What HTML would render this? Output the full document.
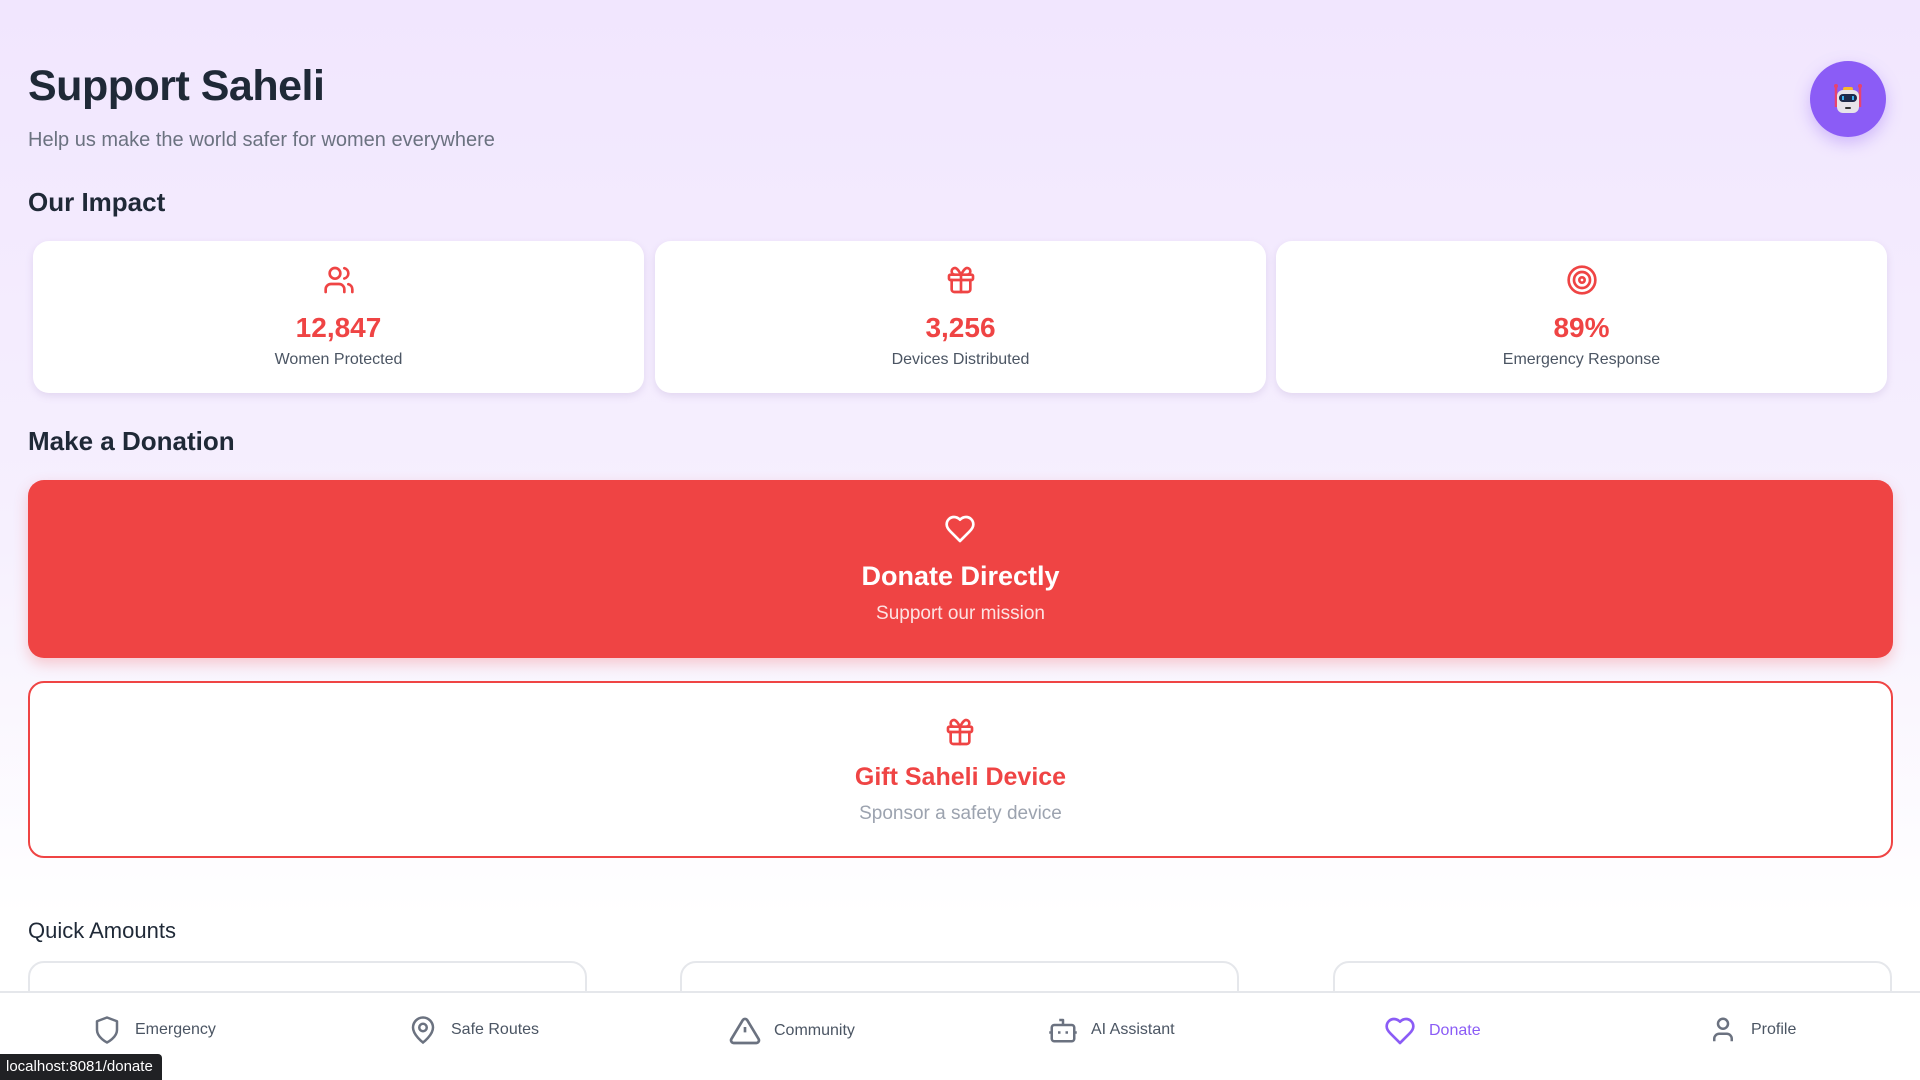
<!DOCTYPE html>
<html><head><meta charset="utf-8"><style>
*{margin:0;padding:0;box-sizing:border-box}
body{width:1920px;height:1080px;overflow:hidden;font-family:"Liberation Sans",sans-serif;background:linear-gradient(180deg,#f1e6fe 0%,#f6f0fe 50%,#ffffff 85%);position:relative;color:#1f2937}
.abs{position:absolute}
h1{position:absolute;left:28px;top:62px;font-size:43px;font-weight:bold;color:#1f2937;letter-spacing:-0.5px}
.sub{left:28px;top:129px;font-size:20px;color:#6b7280}
.h2{left:28px;font-size:26px;font-weight:bold;color:#1f2937}
.card{position:absolute;top:241px;width:611px;height:152px;background:#fff;border-radius:16px;box-shadow:0 3px 8px rgba(120,90,160,.15);text-align:center}
.card svg{position:absolute;left:50%;top:23px;margin-left:-16px}
.card .n{position:absolute;top:71px;width:100%;font-size:28px;font-weight:bold;color:#ef4444}
.card .l{position:absolute;top:110px;width:100%;font-size:16px;color:#4b5563}
.big{position:absolute;left:28px;width:1865px;height:178px;border-radius:16px;text-align:center}
.qa{position:absolute;top:961px;width:559px;height:60px;border:2px solid #e5e7eb;border-radius:16px;background:#fff}
.nav{position:absolute;left:0;top:991px;width:1920px;height:89px;background:#fff;border-top:2px solid #e5e7eb}
.ni{position:absolute;top:22px;display:flex;align-items:center;gap:13px;font-size:16px;color:#4b5563}
</style></head><body>
<h1>Support Saheli</h1>
<div class="abs sub">Help us make the world safer for women everywhere</div>
<div class="abs" style="left:1810px;top:61px;width:76px;height:76px;border-radius:50%;background:#8b5cf6;box-shadow:0 6px 16px rgba(139,92,246,.35)">
<svg width="76" height="76" viewBox="0 0 76 76"><line x1="26" y1="26" x2="26" y2="46" stroke="#e8436e" stroke-width="2.5"/><line x1="50" y1="26" x2="50" y2="46" stroke="#e8436e" stroke-width="2.5"/><circle cx="26" cy="25" r="2" fill="#e8436e"/><circle cx="50" cy="25" r="2" fill="#e8436e"/><rect x="33" y="26" width="10" height="4" rx="2" fill="#f9b82b"/><rect x="27" y="29" width="22" height="23" rx="6" fill="#e7e4ea"/><rect x="29" y="33" width="18" height="8" rx="4" fill="#1e2a4a"/><rect x="32" y="35" width="2" height="4" fill="#3ab0f0"/><rect x="42" y="35" width="2" height="4" fill="#3ab0f0"/><rect x="35" y="46" width="6" height="2" rx="1" fill="#333"/></svg></div>
<div class="abs h2" style="top:187px">Our Impact</div>
<div class="card" style="left:33px"><svg width="32" height="32" viewBox="0 0 24 24" fill="none" stroke="#ef4444" stroke-width="2" stroke-linecap="round" stroke-linejoin="round"><path d="M16 21v-2a4 4 0 0 0-4-4H6a4 4 0 0 0-4 4v2"/><circle cx="9" cy="7" r="4"/><path d="M22 21v-2a4 4 0 0 0-3-3.87"/><path d="M16 3.13a4 4 0 0 1 0 7.75"/></svg><div class="n">12,847</div><div class="l">Women Protected</div></div>
<div class="card" style="left:655px"><svg width="32" height="32" viewBox="0 0 24 24" fill="none" stroke="#ef4444" stroke-width="2" stroke-linecap="round" stroke-linejoin="round"><rect x="3" y="8" width="18" height="4" rx="1"/><path d="M12 8v13"/><path d="M19 12v7a2 2 0 0 1-2 2H7a2 2 0 0 1-2-2v-7"/><path d="M7.5 8a2.5 2.5 0 0 1 0-5C9.5 3 12 8 12 8s2.5-5 4.5-5a2.5 2.5 0 0 1 0 5"/></svg><div class="n">3,256</div><div class="l">Devices Distributed</div></div>
<div class="card" style="left:1276px"><svg width="32" height="32" viewBox="0 0 24 24" fill="none" stroke="#ef4444" stroke-width="2"><circle cx="12" cy="12" r="10"/><circle cx="12" cy="12" r="6"/><circle cx="12" cy="12" r="2"/></svg><div class="n">89%</div><div class="l">Emergency Response</div></div>
<div class="abs h2" style="top:426px">Make a Donation</div>
<div class="big" style="top:480px;background:#ef4444;box-shadow:0 6px 14px rgba(239,68,68,.25)">
<svg style="position:absolute;left:916px;top:33px" width="32" height="32" viewBox="0 0 24 24" fill="none" stroke="#fff" stroke-width="2" stroke-linejoin="round"><path d="M19 14c1.5-1.5 3-3.2 3-5.5A5.5 5.5 0 0 0 16.5 3c-1.8 0-3 .5-4.5 2-1.5-1.5-2.7-2-4.5-2A5.5 5.5 0 0 0 2 8.5c0 2.3 1.5 4 3 5.5l7 7Z"/></svg>
<div style="position:absolute;top:81px;width:100%;font-size:27px;font-weight:bold;color:#fff">Donate Directly</div>
<div style="position:absolute;top:123px;width:100%;font-size:19px;color:#fde2e2">Support our mission</div></div>
<div class="big" style="top:681px;height:177px;background:#fff;border:2px solid #ef4444">
<svg style="position:absolute;left:914px;top:33px" width="32" height="32" viewBox="0 0 24 24" fill="none" stroke="#ef4444" stroke-width="2" stroke-linecap="round" stroke-linejoin="round"><rect x="3" y="8" width="18" height="4" rx="1"/><path d="M12 8v13"/><path d="M19 12v7a2 2 0 0 1-2 2H7a2 2 0 0 1-2-2v-7"/><path d="M7.5 8a2.5 2.5 0 0 1 0-5C9.5 3 12 8 12 8s2.5-5 4.5-5a2.5 2.5 0 0 1 0 5"/></svg>
<div style="position:absolute;top:80px;width:100%;font-size:25px;font-weight:bold;color:#ef4444">Gift Saheli Device</div>
<div style="position:absolute;top:120px;width:100%;font-size:19px;color:#9ca3af">Sponsor a safety device</div></div>
<div class="abs" style="left:28px;top:918px;font-size:22px;color:#1f2937">Quick Amounts</div>
<div class="qa" style="left:28px"></div><div class="qa" style="left:680px"></div><div class="qa" style="left:1333px"></div>
<div class="nav">
<div class="ni" style="left:92px"><svg width="30" height="30" viewBox="0 0 24 24" fill="none" stroke="#6b7280" stroke-width="2" stroke-linejoin="round"><path d="M12 22s8-4 8-10V5l-8-3-8 3v7c0 6 8 10 8 10z"/></svg>Emergency</div>
<div class="ni" style="left:408px"><svg width="30" height="30" viewBox="0 0 24 24" fill="none" stroke="#6b7280" stroke-width="2"><path d="M20 10c0 6-8 12-8 12s-8-6-8-12a8 8 0 0 1 16 0z"/><circle cx="12" cy="10" r="3"/></svg>Safe Routes</div>
<div class="ni" style="left:729px"><svg width="32" height="32" viewBox="0 0 24 24" fill="none" stroke="#6b7280" stroke-width="2" stroke-linejoin="round"><path d="M10.3 3.9 1.8 18a2 2 0 0 0 1.7 3h17a2 2 0 0 0 1.7-3L13.7 3.9a2 2 0 0 0-3.4 0z"/><path d="M12 9v4M12 17h.01"/></svg>Community</div>
<div class="ni" style="left:1048px"><svg width="30" height="30" viewBox="0 0 24 24" fill="none" stroke="#6b7280" stroke-width="2" stroke-linejoin="round"><rect x="3" y="8" width="18" height="13" rx="2"/><path d="M12 8V4H9"/><path d="M9 13v2M15 13v2M1 14h2M21 14h2"/></svg>AI Assistant</div>
<div class="ni" style="left:1384px;color:#8b5cf6"><svg width="32" height="32" viewBox="0 0 24 24" fill="none" stroke="#8b5cf6" stroke-width="2" stroke-linejoin="round"><path d="M19 14c1.5-1.5 3-3.2 3-5.5A5.5 5.5 0 0 0 16.5 3c-1.8 0-3 .5-4.5 2-1.5-1.5-2.7-2-4.5-2A5.5 5.5 0 0 0 2 8.5c0 2.3 1.5 4 3 5.5l7 7Z"/></svg>Donate</div>
<div class="ni" style="left:1708px"><svg width="30" height="30" viewBox="0 0 24 24" fill="none" stroke="#6b7280" stroke-width="2"><circle cx="12" cy="7" r="4"/><path d="M19 21v-2a4 4 0 0 0-4-4H9a4 4 0 0 0-4 4v2"/></svg>Profile</div>
</div>
<div class="abs" style="left:0;top:1054px;width:162px;height:26px;background:#202124;color:#fff;font-size:15px;padding:4px 6px;border-top-right-radius:4px">localhost:8081/donate</div>
</body></html>
